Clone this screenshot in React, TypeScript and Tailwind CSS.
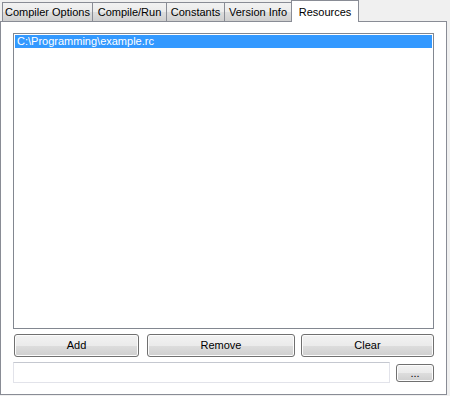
import React from 'react';

const tabs = ['Compiler Options', 'Compile/Run', 'Constants', 'Version Info', 'Resources'];
const tabWidths = ['w-[91px]', 'w-[75px]', 'w-[59px]', 'w-[68px]', 'w-[68px]'];

function Button({ label, className }: { label: string; className: string }) {
    return (
        <div
            className={`${className} flex items-center justify-center rounded-[3px] border border-[#707070] bg-[linear-gradient(to_bottom,#f2f2f2_0%,#ebebeb_50%,#dddddd_51%,#cfcfcf_100%)] shadow-[inset_0_0_0_1px_#fcfcfc] text-[11px] text-black`}
        >
            {label}
        </div>
    );
}

export default function App() {
    const active = 'Resources';

    return (
        <div
            className="w-[450px] h-[396px] bg-[#f0f0f0] text-black"
            style={{ fontFamily: '"Liberation Sans", Arial, sans-serif' }}
        >
            {/* Tab strip */}
            <div className="flex items-end h-[21px] pl-[2px]">
                {tabs.map((t, i) => {
                    const isActive = t === active;
                    return isActive ? (
                        <div
                            key={t}
                            className={`${tabWidths[i]} relative z-10 -ml-[1px] -mb-[1px] h-[22px] border border-b-0 border-[#898c95] bg-white flex items-start justify-center pt-[3px] text-[11px]`}
                        >
                            {t}
                        </div>
                    ) : (
                        <div
                            key={t}
                            className={`${tabWidths[i]} h-[19px] border border-b-0 border-[#898c95] bg-[linear-gradient(to_bottom,#f2f2f2_0%,#ebebeb_50%,#dddddd_51%,#cfcfcf_100%)] flex items-center justify-center text-[11px] ${i > 0 ? '-ml-[1px]' : ''}`}
                        >
                            {t}
                        </div>
                    );
                })}
            </div>

            {/* Panel */}
            <div className="w-[447px] h-[374px] border border-[#898c95] bg-white pl-[12px] pt-[11px]">
                <div className="w-[421px] h-[296px] border border-[#828790] bg-white p-[1px]">
                    <div className="h-[13px] bg-[#3399ff] text-white text-[11px] leading-[13px] pl-[2px]">
                        C:\Programming\example.rc
                    </div>
                </div>

                <div className="flex mt-[5px] pl-[1px] h-[23px]">
                    <Button label="Add" className="w-[125px] h-[23px]" />
                    <Button label="Remove" className="w-[148px] h-[23px] ml-[8px]" />
                    <Button label="Clear" className="w-[133px] h-[23px] ml-[6px]" />
                </div>

                <div className="flex items-center mt-[5px]">
                    <div className="w-[377px] h-[21px] border border-[#e2e3ea] border-t-[#c5c8d0] bg-white" />
                    <Button label="..." className="w-[38px] h-[18px] ml-[6px] mt-[1px]" />
                </div>
            </div>
        </div>
    );
}
